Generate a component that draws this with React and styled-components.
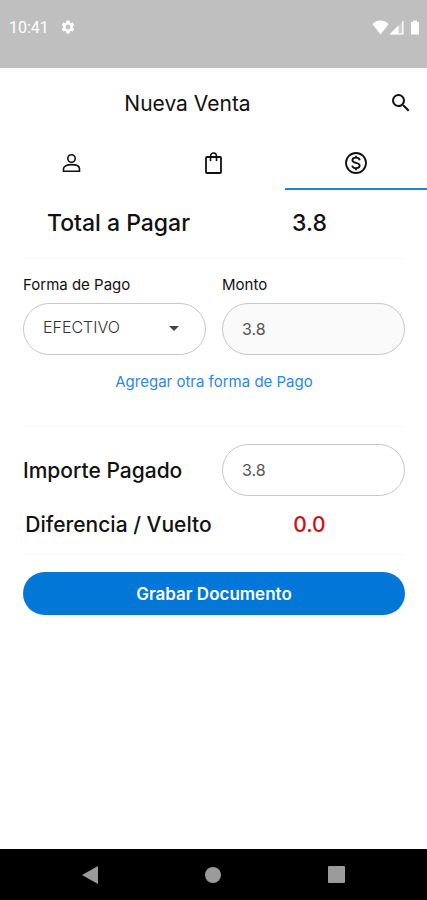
import React, { useState } from 'react';
import styled, { createGlobalStyle } from 'styled-components';
import { MdArrowDropDown, MdSearch, MdSettings } from 'react-icons/md';

const GlobalStyle = createGlobalStyle`
  *, *::before, *::after {
    box-sizing: border-box;
  }

  body {
    margin: 0;
    background: #fff;
    color: #111;
    font-family: Inter, "Liberation Sans", sans-serif;
  }

  button, input, select {
    font-family: inherit;
  }
`;

const Screen = styled.div`
  display: flex;
  flex-direction: column;
  min-height: 100vh;
`;

const StatusBar = styled.div`
  display: flex;
  align-items: center;
  justify-content: space-between;
  height: 68px;
  padding: 0 7px 14px 9px;
  background: #bfbfbf;
  color: #fff;
  font-family: Roboto, sans-serif;
  font-size: 16px;
`;

const StatusGroup = styled.div`
  display: flex;
  align-items: center;
  gap: ${props => props.$gap}px;
`;

const Header = styled.header`
  display: grid;
  grid-template-columns: 52px 1fr 52px;
  align-items: center;
  height: 70px;
`;

const Title = styled.h1`
  grid-column: 2;
  margin: 0;
  padding-right: 52px;
  font-size: 21px;
  font-weight: 400;
  text-align: center;
`;

const IconButton = styled.button`
  display: flex;
  align-items: center;
  justify-content: center;
  padding: 0;
  border: 0;
  background: none;
  color: #111;
  font-size: 24px;
`;

const Tabs = styled.nav`
  display: grid;
  grid-template-columns: repeat(3, 1fr);
`;

const Tab = styled(IconButton)`
  height: 52px;
  border-bottom: 2px solid ${props => (props.$active ? '#1c85dc' : 'transparent')};
`;

const Content = styled.main`
  flex: 1;
  padding: 0 22px 0 23px;
`;

const Divider = styled.hr`
  margin: 0;
  border: 0;
  border-top: 1px solid #f8f8f8;
`;

const SummaryRow = styled.div`
  display: grid;
  grid-template-columns: 1fr 1fr;
  align-items: center;
  height: ${props => props.$height}px;
  padding-bottom: 2px;
  font-size: ${props => props.$size}px;
  font-weight: 500;
  text-align: center;
  white-space: nowrap;
`;

const Difference = styled.span`
  color: #d20f14;
`;

const FieldRow = styled.div`
  display: grid;
  grid-template-columns: 1fr 1fr;
  column-gap: 16px;
  align-items: center;
  padding-top: ${props => props.$top}px;
`;

const Label = styled.label`
  display: block;
  height: 28px;
  font-size: 15px;
  line-height: 20px;
`;

const PaidLabel = styled.label`
  font-size: 21px;
  font-weight: 500;
  white-space: nowrap;
`;

const TextInput = styled.input`
  display: block;
  width: 100%;
  height: 52px;
  padding: 0 19px;
  border: 1px solid #c8c8c8;
  border-radius: 26px;
  background: ${props => (props.readOnly ? '#fafafa' : '#fff')};
  color: #555;
  font-size: 16px;
`;

const SelectBox = styled.div`
  position: relative;
`;

const Select = styled(TextInput)`
  padding-right: 48px;
  padding-bottom: 4px;
  appearance: none;
  color: #333;
  font-weight: 300;
`;

const SelectArrow = styled(MdArrowDropDown)`
  position: absolute;
  top: 13px;
  right: 20px;
  color: #444;
  font-size: 24px;
  pointer-events: none;
`;

const AddLink = styled.a`
  display: block;
  padding: 17px 0 34px;
  color: #2a8ae6;
  font-size: 15px;
  line-height: 20px;
  text-align: center;
  text-decoration: none;
`;

const SaveButton = styled.button`
  display: block;
  width: 100%;
  height: 43px;
  margin-top: 17px;
  border: 0;
  border-radius: 22px;
  background: #0277d8;
  color: #fff;
  font-size: 17px;
  font-weight: 600;
`;

const NavBar = styled.nav`
  display: grid;
  grid-template-columns: repeat(3, 1fr);
  height: 51px;
  padding: 0 28px;
  background: #000;

  button {
    color: #9b9b9b;
  }
`;

const WifiIcon = () =>
  <svg width="17" height="15" viewBox="0 0 17 15" fill="currentColor">
    <path d="M8.5 14.5L.5 4.2C2.7 1.700 5.500.6 8.500.6s5.800 1.100 8 3.600z" />
  </svg>;

const SignalIcon = () =>
  <svg width="15" height="15" viewBox="0 0 15 15" fill="currentColor">
    <path d="M.5 14.500L14.500.5v14z" opacity=".25" />
    <path d="M.5 14.500L9.500 5.500v9z" />
    <path d="M13.200 1.800l1.300-1.300v14H9v-1.300h4.200z" />
  </svg>;

const BatteryIcon = () =>
  <svg width="16" height="15" viewBox="0 0 16 15" fill="currentColor">
    <path d="M9 .5h4V2h1.500q.5 0 .5.500v11.500q0 .5-.5.500h-7q-.5 0-.5-.5V2.500q0-.5.500-.5H9z" />
  </svg>;

const PersonIcon = () =>
  <svg
    width="24"
    height="24"
    viewBox="0 0 24 24"
    fill="none"
    stroke="currentColor"
    strokeWidth="1.6"
  >
    <circle cx="12.500" cy="7.500" r="3.700" />
    <path d="M4.500 20.200v-2.400c0-2.600 3.400-4.200 8-4.200s8 1.600 8 4.200v2.400z" />
  </svg>;

const BagIcon = () =>
  <svg
    width="24"
    height="24"
    viewBox="0 0 24 24"
    fill="none"
    stroke="currentColor"
    strokeWidth="1.8"
  >
    <rect x="5" y="6" width="15" height="16" rx="1" />
    <path d="M9.500 10V5.500c0-2 1.300-3.500 3-3.500s3 1.500 3 3.500V10" strokeWidth="1.600" />
  </svg>;

const CoinIcon = () =>
  <svg
    width="24"
    height="24"
    viewBox="0 0 24 24"
    fill="none"
    stroke="currentColor"
    strokeWidth="1.8"
  >
    <circle cx="12" cy="12" r="10" />
    <path
      d="M15.800 9.200C15.400 7.500 13.900 6.700 12 6.700c-2.100 0-3.600 1-3.600 2.500 0 1.700 1.700 2.200 3.600 2.700s3.700 1 3.700 2.700c0 1.600-1.600 2.600-3.700 2.600-2 0-3.500-.8-3.800-2.600M12 4.800v2M12 17.200v2"
      strokeWidth="1.8"
    />
  </svg>;

const App = () => {
  const [paid, setPaid] = useState('3.8');
  return (
    <Screen>
      <GlobalStyle />
      <StatusBar>
        <StatusGroup $gap={11}>
          <span>10:41</span>
          <MdSettings size={16} />
        </StatusGroup>
        <StatusGroup $gap={0}>
          <WifiIcon />
          <SignalIcon />
          <BatteryIcon />
        </StatusGroup>
      </StatusBar>
      <Header>
        <Title>Nueva Venta</Title>
        <IconButton aria-label="Buscar"><MdSearch /></IconButton>
      </Header>
      <Tabs>
        <Tab aria-label="Cliente"><PersonIcon /></Tab>
        <Tab aria-label="Productos"><BagIcon /></Tab>
        <Tab aria-label="Pago" $active><CoinIcon /></Tab>
      </Tabs>
      <Content>
        <SummaryRow $height={68} $size={23}>
          <span>Total a Pagar</span>
          <span>3.8</span>
        </SummaryRow>
        <Divider />
        <FieldRow $top={16}>
          <div>
            <Label htmlFor="method">Forma de Pago</Label>
            <SelectBox>
              <Select as="select" id="method" defaultValue="EFECTIVO">
                <option>EFECTIVO</option>
              </Select>
              <SelectArrow />
            </SelectBox>
          </div>
          <div>
            <Label htmlFor="amount">Monto</Label>
            <TextInput id="amount" value="3.8" readOnly />
          </div>
        </FieldRow>
        <AddLink href="#pago">Agregar otra forma de Pago</AddLink>
        <Divider />
        <FieldRow $top={17}>
          <PaidLabel htmlFor="paid">Importe Pagado</PaidLabel>
          <TextInput
            id="paid"
            value={paid}
            onChange={event => setPaid(event.target.value)}
          />
        </FieldRow>
        <SummaryRow $height={58} $size={21}>
          <span>Diferencia / Vuelto</span>
          <Difference>0.0</Difference>
        </SummaryRow>
        <Divider />
        <SaveButton>Grabar Documento</SaveButton>
      </Content>
      <NavBar>
        <IconButton aria-label="Atrás">
          <svg width="18" height="20" viewBox="0 0 18 20" fill="currentColor">
            <path d="M1 10L17 1v18z" />
          </svg>
        </IconButton>
        <IconButton aria-label="Inicio">
          <svg width="18" height="18" viewBox="0 0 18 18" fill="currentColor">
            <circle cx="9" cy="9" r="8" />
          </svg>
        </IconButton>
        <IconButton aria-label="Recientes">
          <svg width="18" height="18" viewBox="0 0 18 18" fill="currentColor">
            <rect x="0" y="0" width="17" height="17" rx="1" />
          </svg>
        </IconButton>
      </NavBar>
    </Screen>
  );
};

export default App;
